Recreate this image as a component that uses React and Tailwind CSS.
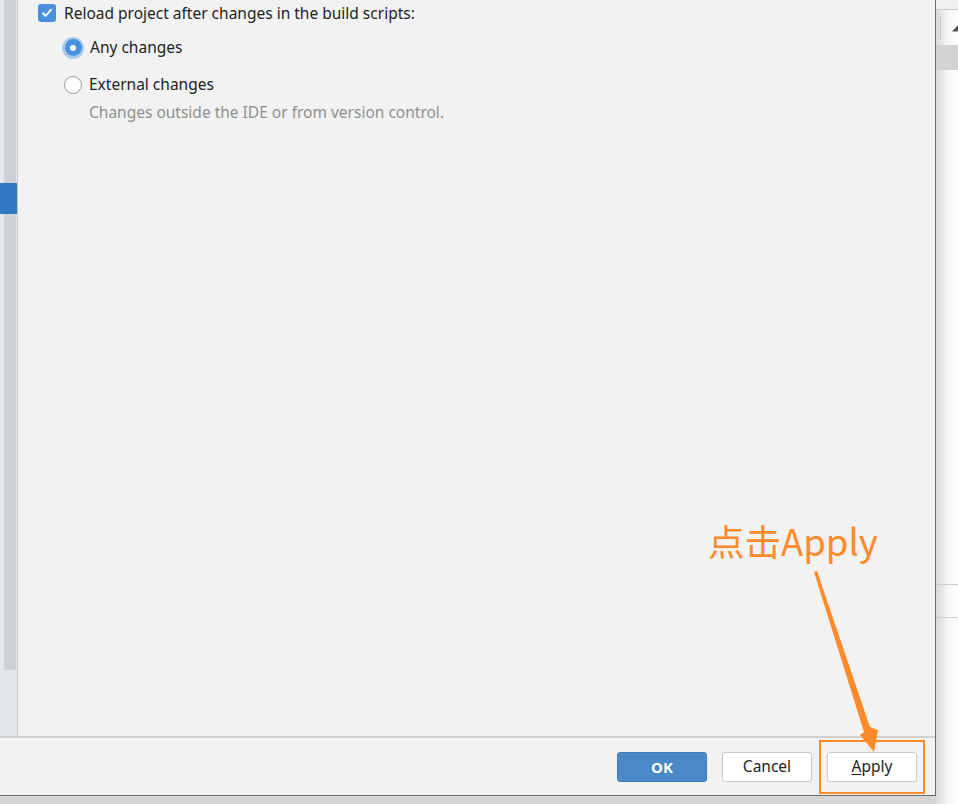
import React from "react";

const font = { fontFamily: '"Noto Sans", "Noto Sans CJK SC", sans-serif' };

function Radio({ checked, label }) {
  return (
    <label className="flex h-[37px] items-center gap-[6px]">
      {checked ? (
        <span className="flex h-[22px] w-[22px] items-center justify-center rounded-full bg-[#a9cdf2]">
          <span className="flex h-[17px] w-[17px] items-center justify-center rounded-full bg-[#4a90dd]">
            <span className="h-[6px] w-[6px] rounded-full bg-white" />
          </span>
        </span>
      ) : (
        <span className="ml-[2px] mr-[1px] h-[18px] w-[18px] rounded-full border border-[#9c9c9c] bg-white" />
      )}
      <span className="text-[15.5px] text-[#1e1e1e]">{label}</span>
    </label>
  );
}

export default function App() {
  return (
    <div className="relative flex h-[804px] w-[958px] overflow-hidden bg-[#d6d6d6]" style={font}>
      {/* dialog */}
      <div className="flex h-[796px] w-[936px] shrink-0 flex-col border-r border-b border-[#6b6b6b] bg-[#f2f2f2]">
        <div className="flex flex-1">
          {/* left tree scrollbar */}
          <div className="flex w-[17px] bg-[#e4e8ec]">
            <div className="relative ml-[4px] flex h-[670px] w-[13px] border-r border-[#e8eaee] bg-[#cdd1d5]">
              <div className="absolute left-[-4px] top-[183px] h-[31px] w-[17px] bg-[#2f78c4]" />
            </div>
          </div>
          <div className="flex-1 border-l border-[#c6c9cc] pl-[20px] pt-[2px]">
            <label className="flex items-center gap-[8px]">
              <span className="flex h-[18px] w-[18px] items-center justify-center rounded-[3px] bg-[#4a8fdc]">
                <svg width="12" height="12" viewBox="0 0 12 12">
                  <path d="M2 6.3l2.6 2.6L10 2.8" fill="none" stroke="white" strokeWidth="2" strokeLinecap="round" strokeLinejoin="round" />
                </svg>
              </span>
              <span className="text-[15.5px] leading-[22px] text-[#1e1e1e]">Reload project after changes in the build scripts:</span>
            </label>
            <div className="ml-[24px] mt-[5px] flex flex-col">
              <Radio checked label="Any changes" />
              <Radio label="External changes" />
              <p className="ml-[27px] mt-[-2px] text-[15.5px] text-[#8f8f8f]">Changes outside the IDE or from version control.</p>
            </div>
          </div>
        </div>
        {/* footer */}
        <div className="flex h-[59px] items-start justify-end gap-[15px] border-t-2 border-[#d0d0d0] pr-[18px] pt-[14px]">
          <button className="h-[30px] w-[90px] rounded-[3px] border border-[#3f7cbf] bg-[#4a88c7] text-[15px] font-bold text-white">OK</button>
          <button className="h-[30px] w-[90px] rounded-[3px] border border-[#c9c9c9] bg-white text-[15.5px] text-[#1e1e1e]">Cancel</button>
          <button className="h-[30px] w-[90px] rounded-[3px] border border-[#c9c9c9] bg-white text-[15.5px] text-[#1e1e1e]">
            <span className="underline underline-offset-2">A</span>pply
          </button>
        </div>
      </div>

      {/* window behind on the right */}
      <div className="flex flex-1 flex-col bg-gradient-to-r from-[#d9d9d9] via-[#f5f5f5] to-white">
        <div className="h-[10px] border-b border-[#cfcfcf] bg-[#efefef]" />
        <div className="flex h-[35px] items-center gap-[10px] pl-[4px]">
          <span className="h-[24px] w-px bg-[#c8c8c8]" />
          <svg width="8" height="10" viewBox="0 0 8 10">
            <path d="M8 1L1 8.5h7z" fill="#555" />
          </svg>
        </div>
        <div className="h-[25px] bg-[#d3d3d3]" />
        <div className="h-[514px]" />
        <div className="h-[34px] border-t border-b border-[#cdcdcd]" />
      </div>

      {/* annotation */}
      <div className="absolute left-[708px] top-[515px] text-[36.5px] leading-[52px] text-[#ff8a2a]" style={{ fontFamily: '"Noto Sans CJK SC", sans-serif' }}>
        点击Apply
      </div>
      <svg className="absolute left-0 top-0" width="958" height="804">
        <polygon points="814,572 817,571 870,727 878,730 874,752 860,735 864,732" fill="#ff8a2a" />
      </svg>
      <div className="absolute left-[819px] top-[740px] h-[54px] w-[106px] border-2 border-[#ff8a2a]" />
    </div>
  );
}
